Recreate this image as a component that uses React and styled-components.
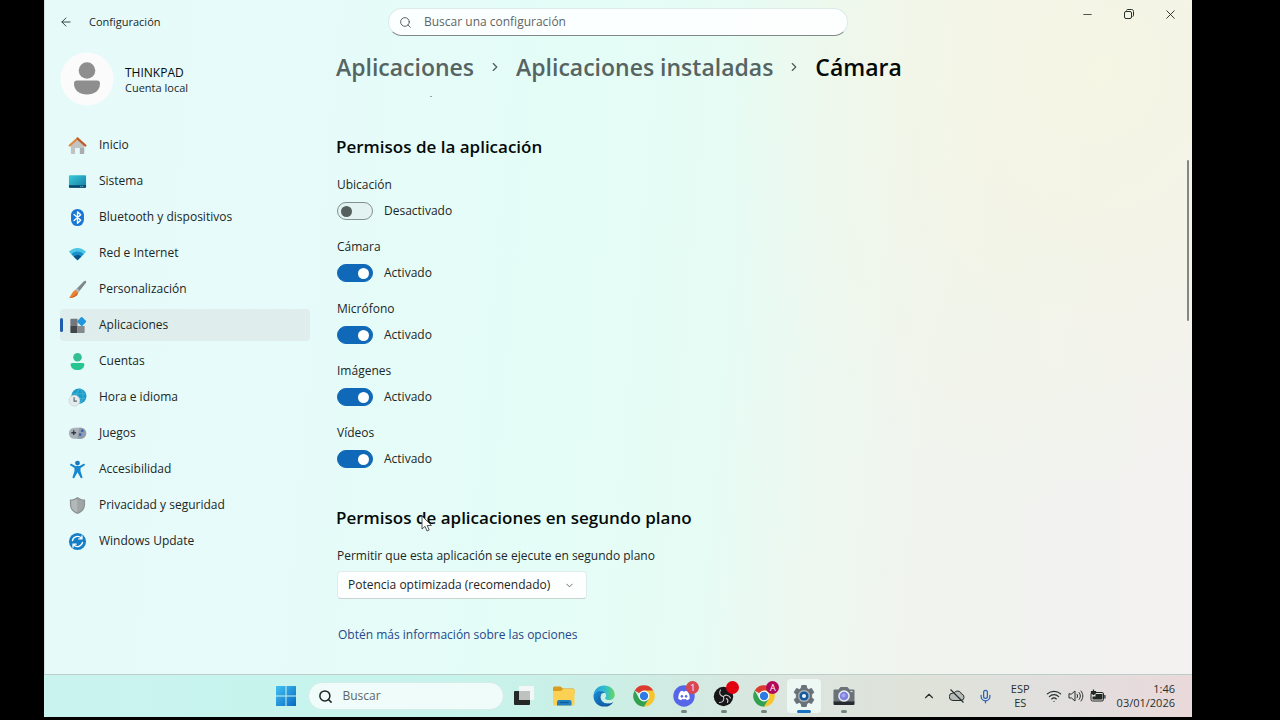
import React from "react";
import styled, { createGlobalStyle, css } from "styled-components";
import { ArrowLeft, ChevronDown, ChevronRight, ChevronUp, Mic, Minus, Search, Wifi, X } from "lucide-react";

const GlobalStyle = createGlobalStyle`
  * { box-sizing: border-box; }
  body {
    margin: 0;
    background: #000;
    color: #1c2625;
    font-family: "Open Sans", "Noto Sans", sans-serif;
    font-size: 12px;
    line-height: 16px;
  }
  button, input, select { font: inherit; color: inherit; }
`;

const Desktop = styled.div`
  display: flex;
  flex-direction: column;
  min-height: calc(100vh - 3px);
  margin: 0 88px 3px 44px;
  position: relative;
  box-shadow: inset 1px 0 #cfe3e1;
  background:
    radial-gradient(ellipse 34% 60% at 92% 10%, rgba(245, 246, 224, 0.8), rgba(245, 246, 224, 0) 100%),
    linear-gradient(95deg, #e6fafa 0%, #e6fbfa 22%, #e4fdf6 46%, #e6fcf5 58%, #edf8f0 67%, #f1f4ee 77%, #f3f1f1 100%);
`;

const TitleBar = styled.header`
  display: grid;
  grid-template-columns: 1fr minmax(200px, 460px) 1fr;
  height: 44px;
`;

const TitleLeft = styled.div`
  display: flex;
  align-items: center;
  gap: 16px;
  padding-left: 15px;
  font-size: 11px;
`;

const IconButton = styled.button`
  display: flex;
  align-items: center;
  justify-content: center;
  flex: none;
  width: ${(p) => p.$w || 14}px;
  height: ${(p) => p.$h || 16}px;
  padding: 0;
  border: 0;
  background: none;
  color: #26302e;
`;

const WindowButtons = styled.div`
  display: flex;
  justify-content: flex-end;
  align-items: flex-start;
  padding-right: 1px;
`;

const SearchBox = styled.label`
  display: flex;
  align-items: center;
  gap: 12px;
  height: 28px;
  margin-top: 8px;
  padding: 0 12px 0 10px;
  border-radius: 14px;
  border: 1px solid #dcebe8;
  border-bottom-color: #7f8a88;
  background: rgba(254, 255, 255, 0.92);
  input {
    flex: 1;
    min-width: 0;
    padding: 0;
    border: 0;
    outline: 0;
    background: none;
    font-size: 12px;
  }
  input::placeholder { color: #5d6665; opacity: 1; }
`;

const TaskSearch = styled(SearchBox)`
  flex: none;
  width: 196px;
  margin: 0 0 0 11px;
  gap: 9px;
  padding-left: 9px;
  border-color: #d5ebe7;
  background: #effcf9;
`;

const Body = styled.div`
  display: flex;
  flex: 1;
`;

const Sidebar = styled.aside`
  width: 250px;
  margin-left: 16px;
  flex: none;
`;

const Account = styled.div`
  display: flex;
  align-items: center;
  gap: 11px;
  height: 54px;
  margin-top: 8px;
  div { display: flex; flex-direction: column; padding-top: 1px; font-size: 11px; line-height: 15px; }
  strong { font-size: 12px; font-weight: 400; color: #050b0a; }
`;

const NavList = styled.nav`
  display: flex;
  flex-direction: column;
  gap: 4px;
  margin-top: 23px;
`;

const NavItem = styled.a`
  display: flex;
  align-items: center;
  gap: 12px;
  height: 32px;
  padding-left: 8px;
  border-radius: 4px;
  color: inherit;
  text-decoration: none;
  position: relative;
  ${(p) => p.$active && css`
    background: #dfeeec;
    &::before {
      content: "";
      position: absolute;
      left: 0;
      top: 9px;
      width: 3px;
      height: 14px;
      border-radius: 2px;
      background: #1f5cae;
    }
  `}
`;

const Content = styled.main`
  flex: 1;
  padding-left: 26px;
  position: relative;
`;

const Breadcrumb = styled.ol`
  display: flex;
  align-items: center;
  gap: 14px;
  margin: 7px 0 0;
  padding: 0;
  list-style: none;
  font-size: 23px;
  line-height: 32px;
  font-weight: 600;
  li { display: flex; align-items: center; gap: 14px; color: #050908; }
  a { color: #566462; text-decoration: none; }
  svg { color: #4d5b59; }
`;

const ScrolledText = styled.div`
  width: 2px;
  height: 1px;
  margin: 13px 0 0 94px;
  background: #8fa8a5;
`;

const SectionTitle = styled.h2`
  margin: ${(p) => p.$top}px 0 0;
  font-size: 17px;
  line-height: 24px;
  font-weight: 600;
  color: #050908;
`;

const Permissions = styled.div`
  display: flex;
  flex-direction: column;
  gap: 18px;
  margin: 18px 0 0 1px;
`;

const Permission = styled.div`
  display: flex;
  flex-direction: column;
  gap: 8px;
`;

const SwitchRow = styled.div`
  display: flex;
  align-items: center;
  gap: 11px;
  height: 20px;
`;

const Switch = styled.input`
  appearance: none;
  display: flex;
  align-items: center;
  width: 36px;
  height: 18px;
  margin: 0;
  padding: 0 3px;
  border: 1px solid #84908e;
  border-radius: 9px;
  background: #e3f3f1;
  &::before {
    content: "";
    width: 11px;
    height: 11px;
    border-radius: 50%;
    background: #53605e;
  }
  &:checked {
    justify-content: flex-end;
    background: #0f68b8;
    border-color: #0f68b8;
  }
  &:checked::before { background: #fff; }
`;

const Field = styled.div`
  display: flex;
  flex-direction: column;
  align-items: flex-start;
  gap: 7px;
  margin: 18px 0 0 1px;
`;

const SelectBox = styled.div`
  display: grid;
  align-items: center;
  width: 250px;
  select, svg { grid-area: 1 / 1; }
  select {
    appearance: none;
    width: 100%;
    height: 28px;
    padding: 0 34px 0 10px;
    border: 1px solid #dfecea;
    border-bottom-color: #c6d3d1;
    border-radius: 4px;
    background: #fdfffe;
  }
  svg { justify-self: end; margin-right: 12px; pointer-events: none; color: #5b6563; }
`;

const MoreLink = styled.a`
  display: inline-block;
  margin: 28px 0 16px 2px;
  color: #24488a;
  text-decoration: none;
`;

const ScrollThumb = styled.div`
  position: absolute;
  right: 3px;
  top: 116px;
  width: 2px;
  height: 161px;
  border-radius: 1px;
  background: #858785;
`;

const Pointer = styled.svg`
  position: absolute;
  left: 111px;
  top: 471px;
`;

const Taskbar = styled.footer`
  display: flex;
  align-items: center;
  height: 43px;
  padding: 0 17px 0 calc(18vw + 1px);
  border-top: 1px solid #bccdca;
  background: linear-gradient(90deg, #c9f3ef 0%, #c6f4ec 35%, #cceee5 50%, #dce5de 66%, #dfe2d9 78%, #e1dfdf 88%, #ead9da 100%);
`;

const AppList = styled.div`
  display: flex;
`;

const AppButton = styled.button`
  display: grid;
  place-items: center;
  position: relative;
  width: 34px;
  height: 34px;
  margin: 0 3px;
  padding: 0;
  border: 0;
  border-radius: 4px;
  background: ${(p) => (p.$active ? "#edf8f5" : "none")};
  &::after {
    content: "";
    display: ${(p) => (p.$running || p.$active ? "block" : "none")};
    position: absolute;
    bottom: 0;
    left: calc(50% - ${(p) => (p.$active ? 7 : 3)}px);
    width: ${(p) => (p.$active ? 14 : 6)}px;
    height: 3px;
    border-radius: 2px;
    background: ${(p) => (p.$active ? "#1873c4" : "#74857f")};
  }
`;

const Badge = styled.span`
  position: absolute;
  top: 2px;
  right: 2px;
  width: 13px;
  height: 13px;
  border-radius: 50%;
  background: ${(p) => p.$color};
  color: #fff;
  font-size: 9px;
  line-height: 13px;
  text-align: center;
`;

const Tray = styled.div`
  display: flex;
  align-items: center;
  margin-left: auto;
  color: #26302e;
  font-size: 11px;
  line-height: 14px;
`;

const TrayGroup = styled.div`
  display: flex;
  align-items: center;
  gap: ${(p) => p.$gap}px;
  margin-left: ${(p) => p.$left || 0}px;
`;

const TrayText = styled.div`
  display: flex;
  flex-direction: column;
  align-items: ${(p) => p.$align};
  margin-left: ${(p) => p.$left}px;
`;

const icons = {
  home: (
    <svg width="19" height="19" viewBox="0 0 20 20">
      <path d="M3 9.5 10 3.5l7 6V18a1 1 0 0 1-1 1h-3.5v-6.5h-5V19H4a1 1 0 0 1-1-1Z" fill="#c2c4c4" />
      <path d="M12.5 12.5H17V18a1 1 0 0 1-1 1h-3.5Z" fill="#a9adae" />
      <path d="M1.8 10 10 2.6l8.2 7.4" fill="none" stroke="#e08a3c" strokeWidth="2.3" strokeLinecap="round" strokeLinejoin="round" />
      <path d="m10 2.6 8.2 7.4" fill="none" stroke="#bd5c31" strokeWidth="2.2" strokeLinecap="round" />
    </svg>
  ),
  system: (
    <svg width="19" height="19" viewBox="0 0 20 20">
      <defs><linearGradient id="sys" x1="0" y1="0" x2="1" y2="1"><stop stopColor="#39cbd8" /><stop offset="1" stopColor="#137ca5" /></linearGradient></defs>
      <rect x="1" y="3.5" width="18" height="13" rx="1" fill="url(#sys)" />
      <path d="M1 14h18v1.5a1 1 0 0 1-1 1H2a1 1 0 0 1-1-1Z" fill="#08466d" />
      <path d="M13 15.2h1m1 0h1" stroke="#7fd1ea" strokeWidth="1" />
    </svg>
  ),
  bluetooth: (
    <svg width="19" height="19" viewBox="0 0 20 20">
      <rect x="3.2" y="1" width="13.6" height="18" rx="6.6" fill="#1976d6" />
      <path d="m6.4 6.8 7 6.2L10 16V4l3.4 3-7 6.2" fill="none" stroke="#fff" strokeWidth="1.4" strokeLinejoin="round" strokeLinecap="round" />
    </svg>
  ),
  network: (
    <svg width="19" height="19" viewBox="0 0 20 20">
      <path d="M1 8.2C6 2.8 14 2.8 19 8.2L10 17.2Z" fill="#4cc5e6" />
      <path d="M3.5 10.7c3.8-3.8 9.2-3.8 13 0L10 17.2Z" fill="#168fc9" />
      <path d="M6 13.2c2.3-2.2 5.7-2.2 8 0l-4 4Z" fill="#095189" />
    </svg>
  ),
  brush: (
    <svg width="19" height="19" viewBox="0 0 20 20">
      <path d="M18.8 1c.7.6.4 1.4 0 2.2L10.800 13.200 7.800 10.600 16.500 1.700c.7-.7 1.700-1.200 2.300-.7Z" fill="#7f878b" />
      <path d="m9.700 8.600 2.700 2.600-1.600 2-3-2.600Z" fill="#b4babd" />
      <path d="M7.800 10.600l3 2.600c-.6 3-4.200 5.800-9.700 5.500C3.500 17 3.600 12.700 7.800 10.600Z" fill="#ea8330" />
      <path d="M1.100 18.700C4.700 17.800 7.200 16.500 8.700 14.500l2-.8c-.8 2.900-4.400 5.400-9.600 5Z" fill="#cf5f22" />
    </svg>
  ),
  apps: (
    <svg width="19" height="19" viewBox="0 0 20 20">
      <path d="M3.500 3H10v7.500H2.500V4a1 1 0 0 1 1-1Z" fill="#73777b" />
      <path d="M2.500 10.500H10V18H3.500a1 1 0 0 1-1-1Z" fill="#42464b" />
      <path d="M10 10.500h7.500V17a1 1 0 0 1-1 1H10Z" fill="#858a8f" />
      <rect x="10.800" y="2.200" width="7.200" height="7.200" rx="1" transform="rotate(45 14.400 5.800)" fill="#2096dc" />
    </svg>
  ),
  accounts: (
    <svg width="19" height="19" viewBox="0 0 20 20">
      <circle cx="10" cy="5.500" r="4.500" fill="#33bf91" />
      <path d="M4.600 11.500h10.800c1 0 1.800.7 1.800 1.700 0 3.600-3 5.800-7.200 5.800s-7.200-2.200-7.200-5.800c0-1 .8-1.700 1.800-1.700Z" fill="#27c690" />
    </svg>
  ),
  time: (
    <svg width="19" height="19" viewBox="0 0 20 20">
      <circle cx="11.500" cy="8.500" r="8" fill="#1a9bc9" />
      <path d="M4.500 6h14M5 11h14M12 1c-4 4-4 11 0 15M13 1c4 4 4 11 0 15" fill="none" stroke="#3ab0d0" strokeWidth="1.100" />
      <circle cx="6.800" cy="13.200" r="5.800" fill="#e5eaec" stroke="#b6c3c9" strokeWidth=".5" />
      <path d="M6.400 9.800v4h3" fill="none" stroke="#5c6569" strokeWidth="1.200" />
    </svg>
  ),
  games: (
    <svg width="19" height="19" viewBox="0 0 20 20">
      <rect x="1" y="4" width="18" height="11.500" rx="5.500" fill="#a8b0b8" />
      <path d="M12 4h1.500a5.500 5.500 0 0 1 0 11.500H10Z" fill="#919ba9" />
      <path d="M3.500 9.200h5M6 6.700v5" stroke="#343a43" strokeWidth="1.400" />
      <circle cx="15" cy="7.200" r="1.400" fill="#3262b5" /><circle cx="12.800" cy="11.200" r="1.400" fill="#3262b5" />
    </svg>
  ),
  access: (
    <svg width="19" height="19" viewBox="0 0 20 20">
      <circle cx="10" cy="3.200" r="2.500" fill="#1776bd" />
      <path d="m3.500 4 4.300 2.200h4.400L16.500 4c1.200-.5 1.800 1 .8 1.700L13.200 8.500v3.300l2 6c.3 1.300-1.600 1.800-2.100.6L10 13l-3.100 5.400c-.5 1.200-2.400.7-2.100-.6l2-6V8.500L2.700 5.700C1.700 5 2.300 3.500 3.500 4Z" fill="#1787cf" />
    </svg>
  ),
  privacy: (
    <svg width="19" height="19" viewBox="0 0 20 20">
      <path d="M10 1c2.300 1.800 5 2.700 8 2.800v5c0 5-3 8.200-8 10.200-5-2-8-5.200-8-10.200v-5C5 3.700 7.700 2.800 10 1Z" fill="#8a9193" />
      <path d="M10 2.500c2 1.400 4.200 2.200 6.700 2.400v4c0 4.200-2.600 6.900-6.700 8.700Z" fill="#a0a5a6" />
      <path d="M10 2.500C8 3.900 5.800 4.700 3.300 4.900v4c0 4.200 2.600 6.900 6.700 8.700Z" fill="#b3b8b9" />
    </svg>
  ),
  update: (
    <svg width="19" height="19" viewBox="0 0 20 20">
      <circle cx="10" cy="10" r="9" fill="#147fc7" />
      <path d="M4.700 9A5.500 5.500 0 0 1 14 6.300M15.300 11A5.500 5.500 0 0 1 6 13.700M14.700 4v3.300h-3.400M5.300 16v-3.300h3.400" fill="none" stroke="#fff" strokeWidth="1.400" strokeLinecap="round" />
    </svg>
  ),
};

const nav = [
  ["Inicio", "home"],
  ["Sistema", "system"],
  ["Bluetooth y dispositivos", "bluetooth"],
  ["Red e Internet", "network"],
  ["Personalización", "brush"],
  ["Aplicaciones", "apps"],
  ["Cuentas", "accounts"],
  ["Hora e idioma", "time"],
  ["Juegos", "games"],
  ["Accesibilidad", "access"],
  ["Privacidad y seguridad", "privacy"],
  ["Windows Update", "update"],
];

const permissions = [
  ["Ubicación", false],
  ["Cámara", true],
  ["Micrófono", true],
  ["Imágenes", true],
  ["Vídeos", true],
];

const Avatar = () => (
  <svg width="54" height="54" viewBox="0 0 54 54">
    <circle cx="27" cy="27" r="26.500" fill="#fbfbfb" />
    <circle cx="27" cy="18.500" r="8.300" fill="#8e8e8e" />
    <path d="M17 28.500h20a3 3 0 0 1 3 3c0 7-5.500 11-13 11s-13-4-13-11a3 3 0 0 1 3-3Z" fill="#8e8e8e" />
  </svg>
);

const WindowsLogo = () => (
  <svg width="22" height="22" viewBox="0 0 22 22">
    <defs><linearGradient id="win" x1="0" y1="0" x2="1" y2="1"><stop stopColor="#43c1f3" /><stop offset="1" stopColor="#0869c4" /></linearGradient></defs>
    <path d="M1 1h9.500v9.500H1ZM11.500 1H21v9.500h-9.500ZM1 11.500h9.500V21H1ZM11.500 11.500H21V21h-9.500Z" fill="url(#win)" />
  </svg>
);

const Chrome = () => (
  <svg width="22" height="22" viewBox="0 0 22 22">
    <path d="M11 11 1.700 5.600A10.700 10.700 0 0 1 20.300 5.600Z" fill="#dc3b31" />
    <path d="M11 5.600h9.300A10.700 10.700 0 0 1 11 21.700l4.700-8Z" fill="#f6c52b" />
    <path d="m6.300 13.700-4.600-8.100A10.700 10.700 0 0 0 11 21.700l4.700-8Z" fill="#34a150" />
    <circle cx="11" cy="11" r="5.400" fill="#fff" />
    <circle cx="11" cy="11" r="4.200" fill="#2e7be3" />
  </svg>
);

const TaskView = () => (
  <svg width="22" height="22" viewBox="0 0 22 22">
    <rect x="1" y="6" width="16" height="14" rx="1" fill="#252827" />
    <rect x="6" y="1" width="15" height="14" rx="1" fill="#f3f7f6" />
    <path d="M6 6h11v9H6Z" fill="#bdc1c0" />
  </svg>
);

const Explorer = () => (
  <svg width="24" height="22" viewBox="0 0 24 22">
    <path d="M1 3a1.500 1.500 0 0 1 1.500-1.500h6l2.500 2h10A1.500 1.500 0 0 1 22.500 5v4H1Z" fill="#d99c1c" />
    <path d="M1 6h8l2-2h10a1.500 1.500 0 0 1 1.500 1.500V19a1.500 1.500 0 0 1-1.500 1.500H2.500A1.500 1.500 0 0 1 1 19Z" fill="#fbd153" />
    <path d="M5 20.500V17a2 2 0 0 1 2-2h10.500a2 2 0 0 1 2 2v3.500Z" fill="#1f7fc0" />
    <path d="M8 17.500h8.500" stroke="#125a94" strokeWidth="1.200" />
  </svg>
);

const Edge = () => (
  <svg width="22" height="22" viewBox="0 0 22 22">
    <defs>
      <linearGradient id="edgeTop" x1="0" y1="0" x2="1" y2="0"><stop stopColor="#1f9be0" /><stop offset=".6" stopColor="#35c1c8" /><stop offset="1" stopColor="#69d858" /></linearGradient>
      <linearGradient id="edgeLow" x1="0" y1="0" x2="1" y2="1"><stop stopColor="#1b8ed6" /><stop offset="1" stopColor="#0b4a91" /></linearGradient>
    </defs>
    <path d="M.5 10.500C1 4.500 5.500.4 11.200.4c6 0 10.500 4.200 10.500 9 0 3.600-2.600 5.700-5.700 5.700-2.200 0-3.900-.8-3.900-1.900 0-.7 1-1.100 1-2.800C13.100 8 10.700 5.700 7 5.700c-3 0-5.500 1.900-6.500 4.800Z" fill="url(#edgeTop)" />
    <path d="M.5 10.500c.8-3 3.500-4.800 6.500-4.800 2.300 0 4.100.9 5.200 2.300-3.400-.6-5.400 1.900-5.100 4.700.4 3.700 4.200 6.700 9.200 5.800a8.500 8.500 0 0 0 4.100-1.600A10.500 10.500 0 0 1 11 21.600C4.800 21.600.2 16.800.5 10.500Z" fill="url(#edgeLow)" />
    <path d="M8.500 9.200c-3 4.500 1.400 10.200 7.800 9.300-2 1.400-4.700 2-7.100.8-4.300-2.100-5-8.100-.7-10.100Z" fill="#126ab5" />
  </svg>
);

const Discord = () => (
  <svg width="22" height="22" viewBox="0 0 22 22">
    <circle cx="11" cy="11" r="10.700" fill="#5765e8" />
    <path d="M7.300 6.500c1-.5 1.600-.6 2.400-.7l.4.800h1.800l.4-.8c.8.100 1.400.2 2.400.7 1.500 2.200 2.200 4.800 2 7.300-1 .8-2 1.300-3 1.500l-.8-1.200a7 7 0 0 1-3.800 0l-.8 1.200c-1-.2-2-.7-3-1.500-.2-2.500.5-5.100 2-7.300Z" fill="#fff" />
    <ellipse cx="8.900" cy="11.300" rx="1.200" ry="1.400" fill="#5765e8" /><ellipse cx="13.100" cy="11.300" rx="1.200" ry="1.400" fill="#5765e8" />
  </svg>
);

const Obs = () => (
  <svg width="22" height="22" viewBox="0 0 22 22">
    <circle cx="10.500" cy="11.500" r="9.700" fill="#171719" />
    <g fill="none" stroke="#cdcdcd" strokeWidth="1.100" strokeLinecap="round">
      <path d="M7.500 5c-2 3.200-.3 6 3 6.700" />
      <path d="M17.500 13c-1.700-3.400-5.500-3.500-7-1.500" />
      <path d="M6.500 17.500c3.500 0 5-2.700 4-6M14.500 17.500c.8-1.500.4-3-1-4" />
    </g>
  </svg>
);

const Gear = () => (
  <svg width="24" height="24" viewBox="0 0 24 24">
    <path d="m9.800 1.500h4.400l.7 3 1.700 1 3-.9 2.200 3.800-2.200 2.100v3l2.200 2.100-2.200 3.800-3-.9-1.700 1-.7 3H9.800l-.7-3-1.700-1-3 .9-2.200-3.800 2.200-2.100v-3L2.200 8.400l2.200-3.800 3 .9 1.700-1Z" fill="#697278" stroke="#697278" strokeLinejoin="round" />
    <circle cx="12" cy="12" r="6" fill="#aab4b9" />
    <circle cx="12" cy="12" r="4.600" fill="#14599d" />
    <circle cx="12" cy="12" r="2.100" fill="#e8f2f7" />
  </svg>
);

const Camera = () => (
  <svg width="22" height="20" viewBox="0 0 22 20">
    <path d="M.5 4.500a1 1 0 0 1 1-1h4L7.500 1h7l2 2.500h4a1 1 0 0 1 1 1V16H.5Z" fill="#6b7379" />
    <path d="M.5 15.500h21V18a1 1 0 0 1-1 1h-19a1 1 0 0 1-1-1Z" fill="#272b2f" />
    <circle cx="11" cy="10" r="5.800" fill="#eceef2" />
    <circle cx="11" cy="10" r="4.300" fill="#7d83dd" />
    <circle cx="10.500" cy="9.500" r="2" fill="#a6a5f2" />
    <path d="M17.500 5.500h2" stroke="#dfe3e5" strokeWidth="1.200" />
  </svg>
);

const CloudOff = () => (
  <svg width="16" height="16" viewBox="0 0 16 16" fill="none" stroke="currentColor">
    <path d="M4 5a3.500 3.500 0 0 0 0 7.500h8a3.300 3.300 0 0 0 .5-6.500C11.600 2.500 6.500 2 4.800 5.300" fill="#b9bdb9" />
    <path d="m1.500 1.500 13 13" strokeWidth="1.200" />
  </svg>
);

const Speaker = () => (
  <svg width="16" height="14" viewBox="0 0 16 14" fill="none" stroke="currentColor" strokeLinecap="round">
    <path d="M1 5v4h2.500L7 12V2L3.500 5ZM9 5.200c.8 1 .8 2.600 0 3.600M11 3.500c1.800 2 1.800 5 0 7M13 2c2.500 3 2.500 7 0 10" />
  </svg>
);

const Battery = () => (
  <svg width="16" height="14" viewBox="0 0 16 14">
    <rect x="1" y="3.500" width="12.500" height="8.500" rx="1.500" fill="none" stroke="#222827" />
    <path d="M5.500 5h7v5.500H2.500V7.500h3ZM14.300 6h1.200v3.500h-1.200Z" fill="#222827" />
    <path d="M3.500.5v5M1.500 2v2l2 1.500 2-1.500V2" stroke="#222827" strokeWidth="1.200" fill="#222827" />
  </svg>
);

const Restore = () => (
  <svg width="10" height="10" viewBox="0 0 10 10" fill="none" stroke="currentColor">
    <rect x=".5" y="2.500" width="7" height="7" rx="1.500" />
    <path d="M2.500 1.500C2.500.8 3 .5 3.800.5h3.700c1.300 0 2 .7 2 2v3.700c0 .8-.3 1.300-1 1.300" />
  </svg>
);

const apps = [
  { name: "Vista de tareas", icon: <TaskView /> },
  { name: "Explorador de archivos", icon: <Explorer /> },
  { name: "Edge", icon: <Edge /> },
  { name: "Chrome", icon: <Chrome /> },
  { name: "Discord", icon: <Discord />, running: true, badge: "1", color: "#d9474f" },
  { name: "OBS Studio", icon: <Obs />, running: true, badge: "", color: "#e3000f" },
  { name: "Chrome, perfil A", icon: <Chrome />, running: true, badge: "A", color: "#b2085a" },
  { name: "Configuración", icon: <Gear />, active: true },
  { name: "Cámara", icon: <Camera />, running: true },
];

export default function App() {
  return (
    <>
      <GlobalStyle />
      <Desktop>
        <TitleBar>
          <TitleLeft>
            <IconButton aria-label="Atrás"><ArrowLeft size={14} strokeWidth={1.5} /></IconButton>
            <span>Configuración</span>
          </TitleLeft>
          <SearchBox>
            <Search size={13} strokeWidth={1.7} color="#4c5755" />
            <input type="search" aria-label="Buscar una configuración" placeholder="Buscar una configuración" />
          </SearchBox>
          <WindowButtons>
            <IconButton $w={41} $h={28} aria-label="Minimizar"><Minus size={13} strokeWidth={1.5} /></IconButton>
            <IconButton $w={41} $h={28} aria-label="Restaurar"><Restore /></IconButton>
            <IconButton $w={42} $h={28} aria-label="Cerrar"><X size={15} strokeWidth={1.5} /></IconButton>
          </WindowButtons>
        </TitleBar>

        <Body>
          <Sidebar>
            <Account>
              <Avatar />
              <div><strong>THINKPAD</strong><span>Cuenta local</span></div>
            </Account>
            <NavList>
              {nav.map(([label, icon]) => (
                <NavItem key={label} href="#" $active={label === "Aplicaciones"}>{icons[icon]}{label}</NavItem>
              ))}
            </NavList>
          </Sidebar>

          <Content>
            <Breadcrumb>
              <li><a href="#">Aplicaciones</a><ChevronRight size={14} /></li>
              <li><a href="#">Aplicaciones instaladas</a><ChevronRight size={14} /></li>
              <li>Cámara</li>
            </Breadcrumb>
            <ScrolledText />
            <SectionTitle $top={38}>Permisos de la aplicación</SectionTitle>
            <Permissions>
              {permissions.map(([label, on]) => (
                <Permission key={label}>
                  <label htmlFor={label}>{label}</label>
                  <SwitchRow>
                    <Switch type="checkbox" role="switch" id={label} defaultChecked={on} />
                    <span>{on ? "Activado" : "Desactivado"}</span>
                  </SwitchRow>
                </Permission>
              ))}
            </Permissions>
            <SectionTitle $top={37}>Permisos de aplicaciones en segundo plano</SectionTitle>
            <Field>
              <label htmlFor="background">Permitir que esta aplicación se ejecute en segundo plano</label>
              <SelectBox>
                <select id="background"><option>Potencia optimizada (recomendado)</option></select>
                <ChevronDown size={11} strokeWidth={2} />
              </SelectBox>
            </Field>
            <MoreLink href="#">Obtén más información sobre las opciones</MoreLink>
            <ScrollThumb />
            <Pointer width="12" height="17" viewBox="0 0 12 17">
              <path d="M1 1v13l3-2.700 2 4.700 2.200-1-2-4.500h4.300Z" fill="#fff" stroke="#444" strokeWidth=".9" />
            </Pointer>
          </Content>
        </Body>

        <Taskbar>
          <IconButton $w={22} $h={22} aria-label="Inicio"><WindowsLogo /></IconButton>
          <TaskSearch>
            <Search size={15} strokeWidth={2.4} color="#1d2423" />
            <input type="search" aria-label="Buscar" placeholder="Buscar" />
          </TaskSearch>
          <AppList>
            {apps.map((app) => (
              <AppButton key={app.name} aria-label={app.name} $active={app.active} $running={app.running}>
                {app.icon}
                {app.color && <Badge $color={app.color}>{app.badge}</Badge>}
              </AppButton>
            ))}
          </AppList>
          <Tray>
            <TrayGroup $gap={13}>
              <ChevronUp size={14} />
              <CloudOff />
              <Mic size={15} color="#2b62b5" />
            </TrayGroup>
            <TrayText $align="center" $left={18}><span>ESP</span><span>ES</span></TrayText>
            <TrayGroup $gap={6} $left={16}>
              <Wifi size={16} strokeWidth={1.8} />
              <Speaker />
              <Battery />
            </TrayGroup>
            <TrayText $align="flex-end" $left={11}><span>1:46</span><span>03/01/2026</span></TrayText>
          </Tray>
        </Taskbar>
      </Desktop>
    </>
  );
}
